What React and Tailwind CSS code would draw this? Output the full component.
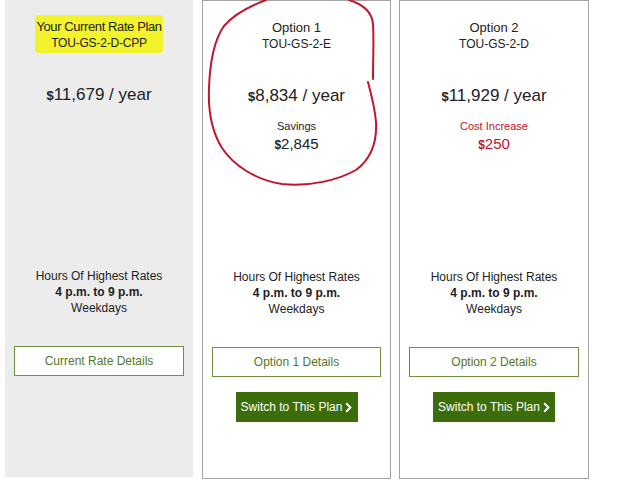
const plans = [
  {
    key: "current",
    title: "Your Current Rate Plan",
    code: "TOU-GS-2-D-CPP",
    price: "11,679",
    details: "Current Rate Details",
  },
  {
    key: "opt1",
    title: "Option 1",
    code: "TOU-GS-2-E",
    price: "8,834",
    deltaLabel: "Savings",
    delta: "2,845",
    details: "Option 1 Details",
    switchable: true,
  },
  {
    key: "opt2",
    title: "Option 2",
    code: "TOU-GS-2-D",
    price: "11,929",
    deltaLabel: "Cost Increase",
    delta: "250",
    increase: true,
    details: "Option 2 Details",
    switchable: true,
  },
];

function Chevron() {
  return (
    <svg width="7" height="11" viewBox="0 0 7 11" className="ml-[3px] mt-[1px]">
      <path d="M1.2 1.2 L5.4 5.5 L1.2 9.8" fill="none" stroke="white" strokeWidth="2" />
    </svg>
  );
}

function PlanColumn({ plan, className }) {
  const current = plan.key === "current";
  return (
    <div className={`flex flex-col items-center text-[#222] ${className}`}>
      <div className="h-[268px] w-full flex flex-col items-center pt-[19px]">
        {current ? (
          <div className="w-[128px] h-[38px] bg-[#f3f32d] rounded-[4px] -mt-[4px] pt-[4px] flex flex-col items-center whitespace-nowrap text-[13px] leading-[16px] tracking-[-0.4px]">
            <div>{plan.title}</div>
            <div className="text-[12px] tracking-[-0.2px]">{plan.code}</div>
          </div>
        ) : (
          <div className="text-center leading-[16px]">
            <div className="text-[13px]">{plan.title}</div>
            <div className="text-[12px]">{plan.code}</div>
          </div>
        )}
        <div className={`${current ? "mt-[30px]" : "mt-[32px]"} text-[17px] leading-[24px]`}>
          <span className="font-bold text-[13px]">$</span>
          {plan.price} / year
        </div>
        {plan.deltaLabel && (
          <div className={`mt-[9px] text-center ${plan.increase ? "text-[#c8102e]" : ""}`}>
            <div className="text-[11px] leading-[16px]">{plan.deltaLabel}</div>
            <div className="text-[15px] leading-[20px]">
              <span className="font-bold text-[12px]">$</span>
              {plan.delta}
            </div>
          </div>
        )}
      </div>
      <div className="text-center text-[12px] leading-[16px]">
        <div>Hours Of Highest Rates</div>
        <div className="font-bold">4 p.m. to 9 p.m.</div>
        <div>Weekdays</div>
      </div>
      <div className="w-full px-[9px] mt-[30px]">
        <button className="w-full h-[30px] border-[1.5px] border-[#6f8f43] bg-white text-[#55762a] text-[12px]">
          {plan.details}
        </button>
      </div>
      {plan.switchable && (
        <button className="mt-[15px] w-[122px] h-[30px] bg-[#3b6e0a] text-white text-[12px] flex items-center justify-center">
          Switch to This Plan
          <Chevron />
        </button>
      )}
    </div>
  );
}

export default function App() {
  return (
    <div
      className="relative w-[624px] h-[493px] bg-white overflow-hidden"
      style={{ fontFamily: '"Liberation Sans", Arial, sans-serif' }}
    >
      <div className="flex pl-[5px]">
        <PlanColumn plan={plans[0]} className="w-[188px] h-[477px] bg-[#ececec]" />
        <PlanColumn plan={plans[1]} className="ml-[9px] w-[189px] h-[479px] border border-[#a3a3a3]" />
        <PlanColumn plan={plans[2]} className="ml-[8px] w-[190px] h-[479px] border border-[#a3a3a3]" />
      </div>
      {/* hand-drawn red circle around option 1 */}
      <svg className="absolute inset-0 pointer-events-none" width="624" height="493">
        <path
          d="M266 0 C250 6 234 14 224 26 C214 40 210 60 209 88 C208 110 211 130 222 148 C234 166 256 180 282 184 C310 187 338 180 356 170 C372 158 377 140 376 122 C375 108 371 94 368 82"
          fill="none"
          stroke="#c4142c"
          strokeWidth="2"
          strokeLinecap="round"
        />
        <path
          d="M349 0 C362 4 372 12 373 24 C374 42 373 60 373 79"
          fill="none"
          stroke="#c4142c"
          strokeWidth="2"
          strokeLinecap="round"
        />
      </svg>
    </div>
  );
}
